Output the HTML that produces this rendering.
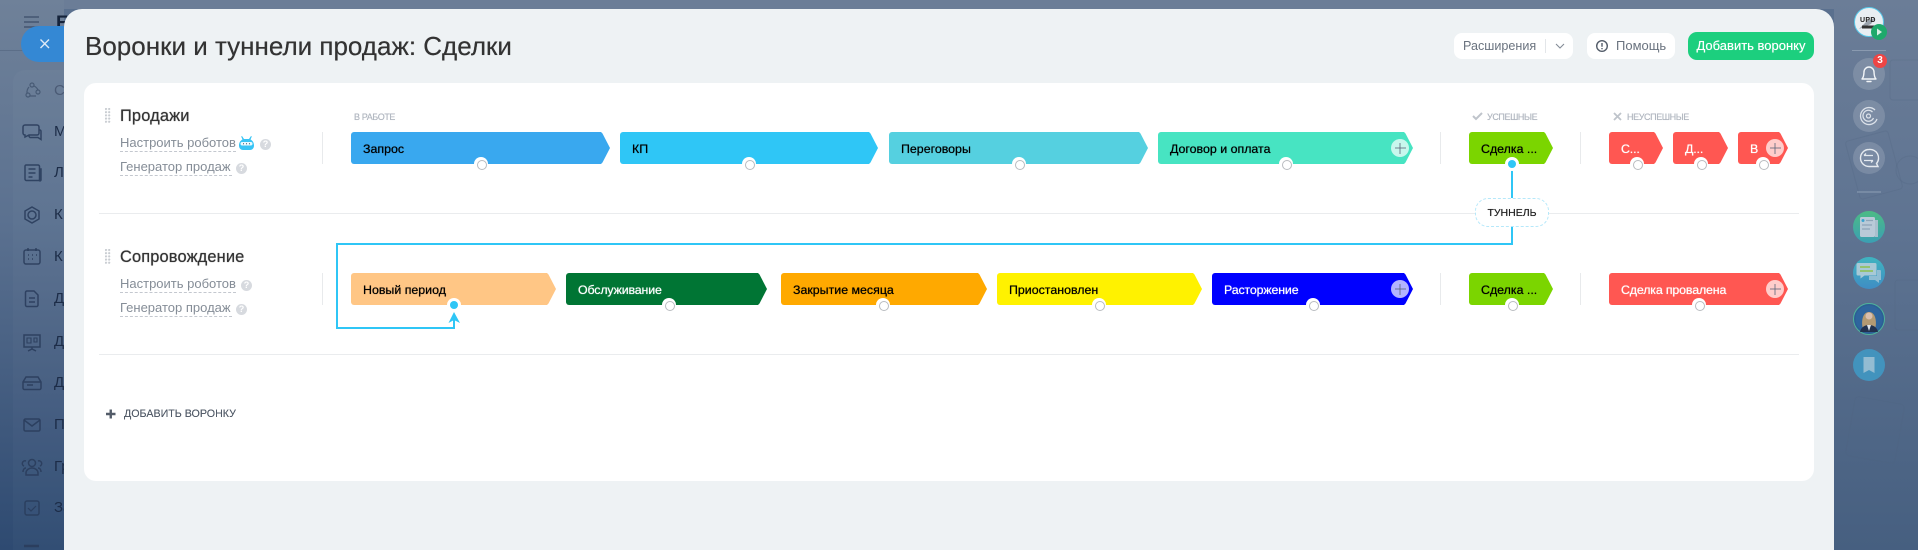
<!DOCTYPE html>
<html lang="ru"><head><meta charset="utf-8"><title>Воронки и туннели продаж</title>
<style>
*{box-sizing:border-box}
html,body{margin:0;padding:0;width:1918px;height:550px;overflow:hidden}
body{position:relative;font-family:"Liberation Sans","DejaVu Sans",sans-serif;background:#5a708e}
div,span{position:absolute;white-space:nowrap}
#bgL{left:0;top:0;width:64px;height:550px;background:linear-gradient(180deg,#6f8199 0,#5b7190 40%,#2e4a71 100%)}
#bgT{left:64px;top:0;width:1770px;height:9px;background:#6b7d97}
#bgR{left:1834px;top:0;width:84px;height:550px;background:linear-gradient(180deg,#6b7d97 0,#5f7492 40%,#465f80 100%)}
#modal{left:64px;top:9px;width:1770px;height:541px;background:#eef2f4;border-radius:18px 18px 0 0}
#card{left:84px;top:83px;width:1730px;height:398px;background:#fff;border-radius:12px}
.t{color:#333;font-size:26px;line-height:30px;text-shadow:0 0 .4px #333}
.st{height:32px;border-radius:3px;font-size:12.4px;line-height:34px;padding-left:12px;color:#000;text-shadow:0 0 .6px currentColor;clip-path:polygon(0 0,calc(100% - 9px) 0,calc(100% - 7.5px) 1.5px,100% 50%,calc(100% - 7.5px) 30.5px,calc(100% - 9px) 100%,0 100%)}
.w{color:#fff;letter-spacing:-.15px;text-shadow:0 0 .7px #fff}
.dot{width:14px;height:14px;border-radius:50%;background:#fff}
.dot:after{content:"";position:absolute;left:3px;top:3px;width:8px;height:8px;border-radius:50%;border:1.2px solid #b9bcc0;background:#fff}
.dot.on:after{border:0;left:3px;top:3px;background:#2fc6f6}
.plus{width:18px;height:18px;border-radius:50%;background:rgba(255,255,255,.7)}
.plus:before{content:"";position:absolute;left:3.5px;top:8px;width:11px;height:2px;background:rgba(90,100,120,.4)}
.plus:after{content:"";position:absolute;left:8px;top:3.5px;width:2px;height:11px;background:rgba(90,100,120,.4)}
.vs{width:1px;height:32px;background:#e8eaec}
.hs{left:99px;width:1700px;height:1px;background:#eaecee}
.name{left:120px;font-size:16.4px;line-height:18px;letter-spacing:.15px;color:#333;text-shadow:0 0 .7px #333}
.lnk{left:120px;font-size:13px;line-height:16px;color:#858d97;border-bottom:1px dashed #c4c8cf;padding-bottom:0;height:17px}
.q{width:11px;height:11px;border-radius:50%;background:#d7dadf;color:#fff;font-size:9px;line-height:11px;text-align:center;font-weight:bold}
.cap{font-size:9px;line-height:12px;color:#b1b7c0;letter-spacing:-.4px;text-shadow:0 0 .4px #b1b7c0}
.btn{background:#fff;border-radius:8px;height:26px;top:33px}
.ltr{left:54px;font-size:15px;line-height:18px;color:#1c2c47}
.grip{width:6px;height:15px;background-image:radial-gradient(circle at 1px 1px,#c8ccd1 1px,transparent 1.2px);background-size:3.2px 3.2px}
</style></head><body>
<div id="bgL"></div><div id="bgT"></div><div id="bgR"></div>

<!-- left sidebar -->
<div style="left:13px;top:70px;width:51px;height:480px;background:rgba(255,255,255,.025);border-radius:12px 0 0 0"></div>
<div style="left:0;top:50px;width:64px;height:1px;background:rgba(30,45,70,.18)"></div>
<svg style="position:absolute;left:0;top:0" width="64" height="550" fill="none" stroke="#2a3d5c" stroke-opacity=".9" stroke-width="1.5">
<g stroke="#3f516d"><path d="M24 17h15M24 22h15M24 27h15"/></g>
<g stroke="#445671" stroke-width="1.2"><circle cx="32" cy="85" r="2"/><circle cx="28" cy="95" r="2"/><circle cx="38" cy="92" r="2"/><path d="M29 87a8 8 0 0 0-2 6M34 86a8 8 0 0 1 4 4M30 96h6"/></g>
<path d="M25 125h12a2 2 0 0 1 2 2v6a2 2 0 0 1-2 2h-8l-4 2v-2a2 2 0 0 1-2-2v-6a2 2 0 0 1 2-2zM39 130h1a1.500 1.500 0 0 1 1 1.500v8l-3-2h-8a2 2 0 0 1-1-2"/>
<path d="M26 165h12a1.500 1.500 0 0 1 1.500 1.500v14h-13a1.500 1.500 0 0 1-1.500-1.500v-13a1.500 1.500 0 0 1 1-1zM39.500 169h1.500v11a1.500 1.500 0 0 1-1.500 1M28.500 169h7M28.500 173h7M28.500 177h4"/>
<path d="M32 207l7 4v8l-7 4-7-4v-8z"/><circle cx="32" cy="215" r="4"/>
<rect x="24" y="250" width="16" height="14" rx="2"/><path d="M28 248v3M36 248v3M28 255h1M32 255h1M36 255h1M28 259h1M32 259h1" />
<path d="M27 291h7l4 4v10a1.500 1.500 0 0 1-1.500 1.500h-9.500a1.500 1.500 0 0 1-1.500-1.500v-12.500a1.500 1.500 0 0 1 1.500-1.500zM29 298h6M29 302h6"/>
<path d="M24 335h16v12h-16zM32 347v2M28 351l4-2 4 2"/><path d="M27 338h4v5h-4zM34 338h3v4h-3z" stroke-width="1.100"/>
<path d="M26 377h12l3 5v6a1.500 1.500 0 0 1-1.500 1.500h-15a1.500 1.500 0 0 1-1.500-1.500v-6zM23 382h18M27 385h6"/>
<rect x="24" y="419" width="16" height="12" rx="1.500"/><path d="M24 420l8 6 8-6"/>
<circle cx="32" cy="463" r="3.500"/><path d="M26 473c0-3 3-5 6-5s6 2 6 5v2h-12zM26 461a2.500 2.500 0 0 0-2 5M23 472c0-2 1-4 3-4M38 461a2.500 2.500 0 0 1 2 5M41 472c0-2-1-4-3-4"/>
<rect x="25" y="501" width="14" height="14" rx="2"/><path d="M28 508l3 3 5-5" stroke-width="1.200"/>
<path d="M24 546h15" stroke-width="2.500"/>
</svg>
<div style="left:56px;top:13px;font-size:19px;line-height:22px;font-weight:bold;color:#15233a">Б</div>
<div class="ltr" style="top:82px;color:#4b5b75">С</div>
<div class="ltr" style="top:123px">М</div><div class="ltr" style="top:164px">Л</div><div class="ltr" style="top:206px">К</div><div class="ltr" style="top:248px">К</div><div class="ltr" style="top:290px">Д</div><div class="ltr" style="top:333px">Д</div><div class="ltr" style="top:374px">Д</div><div class="ltr" style="top:416px">П</div><div class="ltr" style="top:458px">Гр</div><div class="ltr" style="top:499px">За</div>
<div style="left:21px;top:26px;width:60px;height:36px;background:#3488d4;border-radius:18px 0 0 18px"></div>
<svg style="position:absolute;left:39px;top:38px" width="12" height="12" stroke="#dfeaf6" stroke-width="1.400" fill="none"><path d="M1.500 1.500l8.500 8.500M10 1.500l-8.500 8.500"/></svg>

<!-- right sidebar -->
<svg style="position:absolute;left:1834px;top:0" width="84" height="550" fill="none">
<g transform="translate(-1834 0)">
<g stroke="#4f627f" stroke-opacity=".25" stroke-width="1"><rect x="1852" y="135" width="44" height="60" rx="3" transform="rotate(-15 1874 165)"/><circle cx="1910" cy="170" r="14"/><rect x="1890" y="60" width="30" height="40" rx="3"/><rect x="1895" y="280" width="30" height="50" rx="3"/><rect x="1850" y="400" width="50" height="60" rx="4" transform="rotate(10 1875 430)"/></g>
<circle cx="1869" cy="22" r="14.500" fill="#e9eef2" stroke="#58c9ea" stroke-width="1"/>
<path d="M1859 29l8-8 8-3-4 6-7 3z" fill="#9aa3ad"/><path d="M1862 27h14" stroke="#333" stroke-width="3"/>
<circle cx="1879" cy="32" r="8" fill="#1fa96b"/><path d="M1877 28.500l5 3.500-5 3.500z" fill="#d8efe4"/>
<path d="M1852 50.500h34" stroke="#8a9ab0" stroke-width="1"/>
<circle cx="1869" cy="74" r="16" fill="#fff" fill-opacity=".15"/>
<path d="M1862 79c2-2 1.800-5 2-7a5 5 0 0 1 10 0c.2 2 0 5 2 7zM1867 81.500h4" stroke="#f2f5f8" stroke-width="1.400" stroke-linejoin="round" stroke-linecap="round"/>
<circle cx="1880" cy="61" r="7" fill="#ee4545"/>
<circle cx="1869" cy="116" r="16" fill="#fff" fill-opacity=".15"/>
<g stroke="#dbe1e9" stroke-width="1.300"><path d="M1877 119a8.500 8.500 0 1 1-2-9"/><path d="M1873.500 118a5.500 5.500 0 1 1-1-6"/><circle cx="1868.500" cy="116" r="2"/></g>
<circle cx="1869" cy="158" r="16" fill="#fff" fill-opacity=".15"/>
<path d="M1869 149.500a8.500 8.500 0 1 0 0 17h9l-1.500-3a8.500 8.500 0 0 0-7.500-14z" stroke="#e4e9ef" stroke-width="1.400"/><path d="M1864 155.500h9M1864 155.500l2-2M1873 160.500h-9M1873 160.500l-2 2" stroke="#e4e9ef" stroke-width="1.300"/>
<path d="M1857 192h24" stroke="#8da0b6" stroke-width="1"/>
<defs><linearGradient id="g1" x1="0" y1="0" x2="0" y2="1"><stop offset="0" stop-color="#4cbb85"/><stop offset="1" stop-color="#3b9fb3"/></linearGradient><linearGradient id="g2" x1="0" y1="0" x2="0" y2="1"><stop offset="0" stop-color="#3fb4c0"/><stop offset="1" stop-color="#3f8dc4"/></linearGradient></defs>
<circle cx="1869" cy="227" r="16" fill="url(#g1)"/>
<rect x="1860" y="217" width="15" height="20" rx="1.500" fill="#b9cad8"/><rect x="1875" y="220" width="3" height="17" fill="#a9bfcd"/><circle cx="1863" cy="220.500" r="1.500" fill="#3aa4d0"/><path d="M1866 220.500h7M1862 225h10M1862 229h8" stroke="#8ea5b8" stroke-width="1.300"/>
<circle cx="1869" cy="273" r="16" fill="url(#g2)"/>
<path d="M1858 263h17a1.500 1.500 0 0 1 1.500 1.500v11h-12l-4 3v-3h-3a1.500 1.500 0 0 1-1-1.500v-10a1.500 1.500 0 0 1 1.500-1z" fill="#a8c9d6"/><path d="M1877 270h3a1 1 0 0 1 1 1v9h-2v3l-4-3h-6v-4h8z" fill="#8fbdd3"/><path d="M1860 267h10M1860 271h13" stroke="#8cc04f" stroke-width="1.500"/>
<circle cx="1869" cy="319" r="15.500" fill="#2c5f94" stroke="#4fb39b" stroke-width="1"/>
<circle cx="1869" cy="319" r="13.500" fill="#2e659e"/>
<path d="M1863 329c-2-6-1-17 6-17s8 11 6 17z" fill="#b39a73"/><circle cx="1869" cy="316" r="3.500" fill="#d9bfae"/><path d="M1860 332c1-5 5-7 9-7s8 2 9 7z" fill="#22324f"/><path d="M1867 325h4l-2 6z" fill="#dfe5ea"/>
<circle cx="1869" cy="365" r="16" fill="#4293bd"/>
<path d="M1863.500 357h11v16l-5.500-3-5.500 3z" fill="#93bcd2"/>
</g>
</svg>
<div style="left:1873px;top:54px;width:14px;font-size:10px;line-height:14px;font-weight:bold;color:#fff;text-align:center">3</div>
<div style="left:1860px;top:17px;font-size:7px;line-height:8px;font-weight:bold;color:#222;letter-spacing:.3px">UPD</div>

<!-- modal -->
<div id="modal"></div>
<div class="t" style="left:85px;top:31px;letter-spacing:0">Воронки и туннели продаж: Сделки</div>

<div class="btn" style="left:1454px;width:119px"></div>
<div style="left:1463px;top:38px;font-size:12.6px;line-height:16px;color:#6a737f">Расширения</div>
<div style="left:1545px;top:39px;width:1px;height:14px;background:#e3e6e9"></div>
<svg style="position:absolute;left:1555px;top:43px" width="10" height="7" fill="none" stroke="#838b96" stroke-width="1.100"><path d="M1 1l4 4 4-4"/></svg>
<div class="btn" style="left:1587px;width:88px"></div>
<svg style="position:absolute;left:1595px;top:39px" width="14" height="14" fill="none"><circle cx="7" cy="7" r="5.300" stroke="#535c69" stroke-width="1.400"/><path d="M7 4v3.800M7 9v1.200" stroke="#535c69" stroke-width="1.400"/></svg>
<div style="left:1616px;top:38px;font-size:13px;line-height:16px;color:#6a737f">Помощь</div>
<div style="left:1688px;top:32px;width:126px;height:28px;background:#1ccf7e;border-radius:9px;color:#fff;font-size:13px;line-height:28px;text-align:center;text-shadow:0 0 .5px #fff">Добавить воронку</div>

<div id="card"></div>
<div class="hs" style="top:213px"></div>
<div class="hs" style="top:354px"></div>

<!-- funnel 1 info -->
<div class="grip" style="left:105px;top:108px"></div>
<div class="name" style="top:107px">Продажи</div>
<div class="lnk" style="top:135px;width:116px">Настроить роботов</div>
<svg style="position:absolute;left:238px;top:135px" width="17" height="16"><path d="M4 1l2 3h5l2-3 .8.500-1.300 3c2 1 3.500 3 3.500 6 0 3-2 4.500-4 4.500h-7c-2 0-4-1.500-4-4.500 0-3 1.500-5 3.500-6l-1.300-3z" fill="#38c4f5"/><rect x="2.500" y="7" width="12" height="3.500" rx="1.700" fill="#eaf8fd"/><path d="M5 8.700h1M8 8.700h1M11 8.700h1" stroke="#3a5a70"/></svg>
<div class="q" style="left:260px;top:139px">?</div>
<div class="lnk" style="top:159px;width:112px">Генератор продаж</div>
<div class="q" style="left:236px;top:163px">?</div>
<div class="vs" style="left:322px;top:132px"></div>

<div class="cap" style="left:354px;top:111px">В РАБОТЕ</div>
<svg style="position:absolute;left:1472px;top:112px" width="11" height="9" fill="none" stroke="#bfc4cb" stroke-width="2"><path d="M1 4l3 3 6-6"/></svg>
<div class="cap" style="left:1487px;top:111px">УСПЕШНЫЕ</div>
<svg style="position:absolute;left:1613px;top:112px" width="9" height="9" fill="none" stroke="#bfc4cb" stroke-width="1.800"><path d="M1 1l7 7M8 1l-7 7"/></svg>
<div class="cap" style="left:1627px;top:111px">НЕУСПЕШНЫЕ</div>

<div class="st" style="left:351px;top:132px;width:259px;background:#39a8ef">Запрос</div>
<div class="st" style="left:620px;top:132px;width:258px;background:#2fc6f6">КП</div>
<div class="st" style="left:889px;top:132px;width:259px;background:#55d0e0">Переговоры</div>
<div class="st" style="left:1158px;top:132px;width:255px;background:#47e4c2">Договор и оплата</div>
<div class="vs" style="left:1440px;top:132px"></div>
<div class="st" style="left:1469px;top:132px;width:84px;background:#7bd500">Сделка ...</div>
<div class="vs" style="left:1580px;top:132px"></div>
<div class="st w" style="left:1609px;top:132px;width:54px;background:#ff5752">С...</div>
<div class="st w" style="left:1673px;top:132px;width:55px;background:#ff5752">Д...</div>
<div class="st w" style="left:1738px;top:132px;width:50px;background:#ff5752">В</div>

<div class="plus" style="left:1391px;top:139px"></div>
<div class="plus" style="left:1766px;top:139px"></div>

<!-- funnel 2 info -->
<div class="grip" style="left:105px;top:249px"></div>
<div class="name" style="top:248px">Сопровождение</div>
<div class="lnk" style="top:276px;width:116px">Настроить роботов</div>
<div class="q" style="left:241px;top:280px">?</div>
<div class="lnk" style="top:300px;width:112px">Генератор продаж</div>
<div class="q" style="left:236px;top:304px">?</div>
<div class="vs" style="left:322px;top:273px"></div>

<div class="st" style="left:351px;top:273px;width:205px;background:#ffc685">Новый период</div>
<div class="st w" style="left:566px;top:273px;width:201px;background:#007534">Обслуживание</div>
<div class="st" style="left:781px;top:273px;width:206px;background:#ffa900">Закрытие месяца</div>
<div class="st" style="left:997px;top:273px;width:205px;background:#fff200">Приостановлен</div>
<div class="st w" style="left:1212px;top:273px;width:201px;background:#0000ff">Расторжение</div>
<div class="vs" style="left:1440px;top:273px"></div>
<div class="st" style="left:1469px;top:273px;width:84px;background:#7bd500">Сделка ...</div>
<div class="vs" style="left:1580px;top:273px"></div>
<div class="st w" style="left:1609px;top:273px;width:179px;background:#ff5752">Сделка провалена</div>
<div class="plus" style="left:1391px;top:280px"></div>
<div class="plus" style="left:1766px;top:280px"></div>

<!-- tunnel lines -->
<svg style="position:absolute;left:0;top:0" width="1918" height="550" fill="none">
<path d="M1512 164V244H337V328H454V316" stroke="#2fc6f6" stroke-width="2"/>
<path d="M454 312l6 11-6-3-5.500 3z" fill="#2fc6f6"/>
</svg>
<div style="left:1475px;top:198px;width:74px;height:29px;background:#fff;border:1.500px dashed #b5e8fa;border-radius:13px;text-align:center;font-size:10.500px;line-height:28px;color:#222;text-shadow:0 0 .4px #222">ТУННЕЛЬ</div>

<div class="dot" style="left:474px;top:157px"></div>
<div class="dot" style="left:742px;top:157px"></div>
<div class="dot" style="left:1012px;top:157px"></div>
<div class="dot" style="left:1279px;top:157px"></div>
<div class="dot on" style="left:1505px;top:157px"></div>
<div class="dot" style="left:1630px;top:157px"></div>
<div class="dot" style="left:1694px;top:157px"></div>
<div class="dot" style="left:1756px;top:157px"></div>
<div class="dot on" style="left:447px;top:298px"></div>
<div class="dot" style="left:662px;top:298px"></div>
<div class="dot" style="left:876px;top:298px"></div>
<div class="dot" style="left:1092px;top:298px"></div>
<div class="dot" style="left:1306px;top:298px"></div>
<div class="dot" style="left:1505px;top:298px"></div>
<div class="dot" style="left:1692px;top:298px"></div>

<svg style="position:absolute;left:106px;top:409px" width="10" height="10"><path d="M0 5h9.500M4.750 .5v9" stroke="#535c69" stroke-width="2.400"/></svg>
<div style="left:124px;top:407px;font-size:10.700px;line-height:14px;color:#535c69;text-shadow:0 0 .3px #535c69">ДОБАВИТЬ ВОРОНКУ</div>
</body></html>
